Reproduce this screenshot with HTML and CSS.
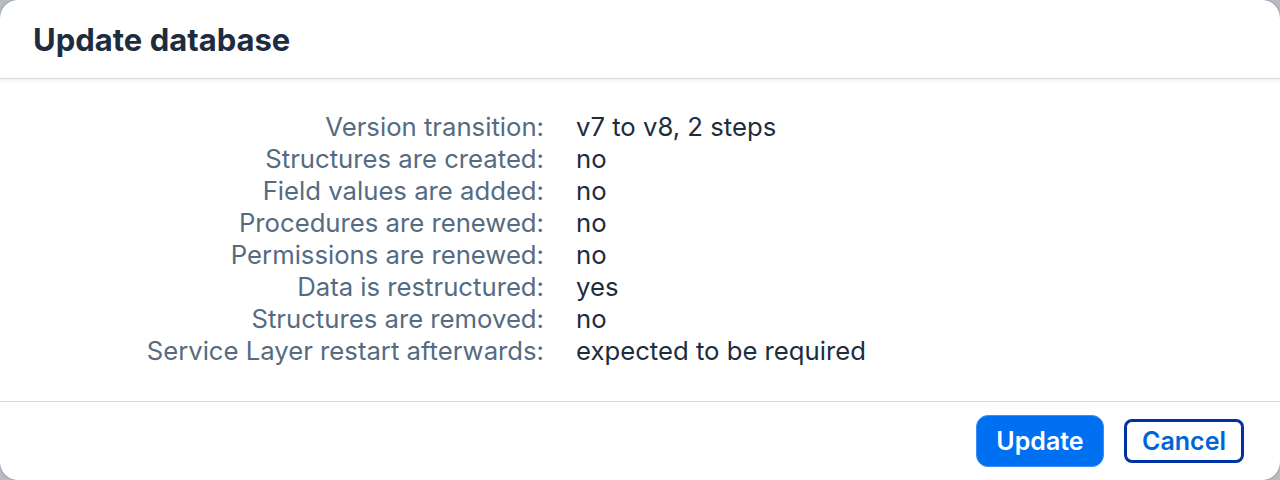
FILE: index.html
```html
<!DOCTYPE html>
<html lang="en">
<head>
    <meta charset="UTF-8">
    <meta name="viewport" content="width=device-width, initial-scale=1.0">
    <title>Update database</title>
    <link rel="stylesheet" href="styles.css">
</head>
<body>
    <div class="dialog">
        <header class="dialog-header">
            <h1>Update database</h1>
        </header>
        <div class="dialog-content">
            <dl class="summary">
                <dt>Version transition:</dt>
                <dd>v7 to v8, 2 steps</dd>
                <dt>Structures are created:</dt>
                <dd>no</dd>
                <dt>Field values are added:</dt>
                <dd>no</dd>
                <dt>Procedures are renewed:</dt>
                <dd>no</dd>
                <dt>Permissions are renewed:</dt>
                <dd>no</dd>
                <dt>Data is restructured:</dt>
                <dd>yes</dd>
                <dt>Structures are removed:</dt>
                <dd>no</dd>
                <dt>Service Layer restart afterwards:</dt>
                <dd>expected to be required</dd>
            </dl>
        </div>
        <footer class="dialog-footer">
            <button class="btn btn-emphasized">Update</button>
            <button class="btn btn-transparent is-focused">Cancel</button>
        </footer>
    </div>
</body>
</html>
```

FILE: styles.css
```css
html,
body {
    height: 100%;
}

body {
    margin: 0;
    background-color: #b9bdc2;
    font-family: Inter, "Noto Sans", Arial, sans-serif;
    color: #1d2d3e;
}

.dialog {
    height: 100%;
    box-sizing: border-box;
    display: flex;
    flex-direction: column;
    background-color: #fff;
    border-radius: 18px;
    box-shadow: 0 0 2px rgba(34, 54, 73, 0.6);
    overflow: hidden;
}

.dialog-header {
    height: 78px;
    padding: 0 33px;
    display: flex;
    align-items: center;
    border-bottom: 1px solid #d9d9d9;
    box-shadow: 0 2px 4px rgba(0, 0, 0, 0.06);
}

.dialog-header h1 {
    margin: 0;
    font-size: 31px;
    font-weight: 700;
    color: #1d2d3e;
}

.dialog-content {
    flex: 1;
    padding: 32px 32px;
}

.summary {
    margin: 0;
    display: grid;
    grid-template-columns: 512px 1fr;
    column-gap: 32px;
    font-size: 25.7px;
    line-height: 32px;
}

.summary dt {
    text-align: right;
    color: #556b82;
}

.summary dd {
    margin: 0;
    color: #1d2d3e;
}

.dialog-footer {
    height: 78px;
    padding: 0 32px;
    display: flex;
    align-items: center;
    justify-content: flex-end;
    gap: 16px;
    border-top: 1px solid #d9d9d9;
}

.btn {
    width: 128px;
    height: 52px;
    padding: 0;
    border-radius: 12px;
    font-family: inherit;
    font-size: 25px;
    font-weight: 600;
    cursor: pointer;
}

.btn-emphasized {
    background-color: #0070f2;
    border: 1px solid #3c8ef5;
    color: #fff;
}

.btn-transparent {
    background-color: transparent;
    border: 1px solid transparent;
    color: #0064d9;
}

.btn.is-focused {
    outline: 3px solid #0032a5;
    outline-offset: -7px;
}
```
